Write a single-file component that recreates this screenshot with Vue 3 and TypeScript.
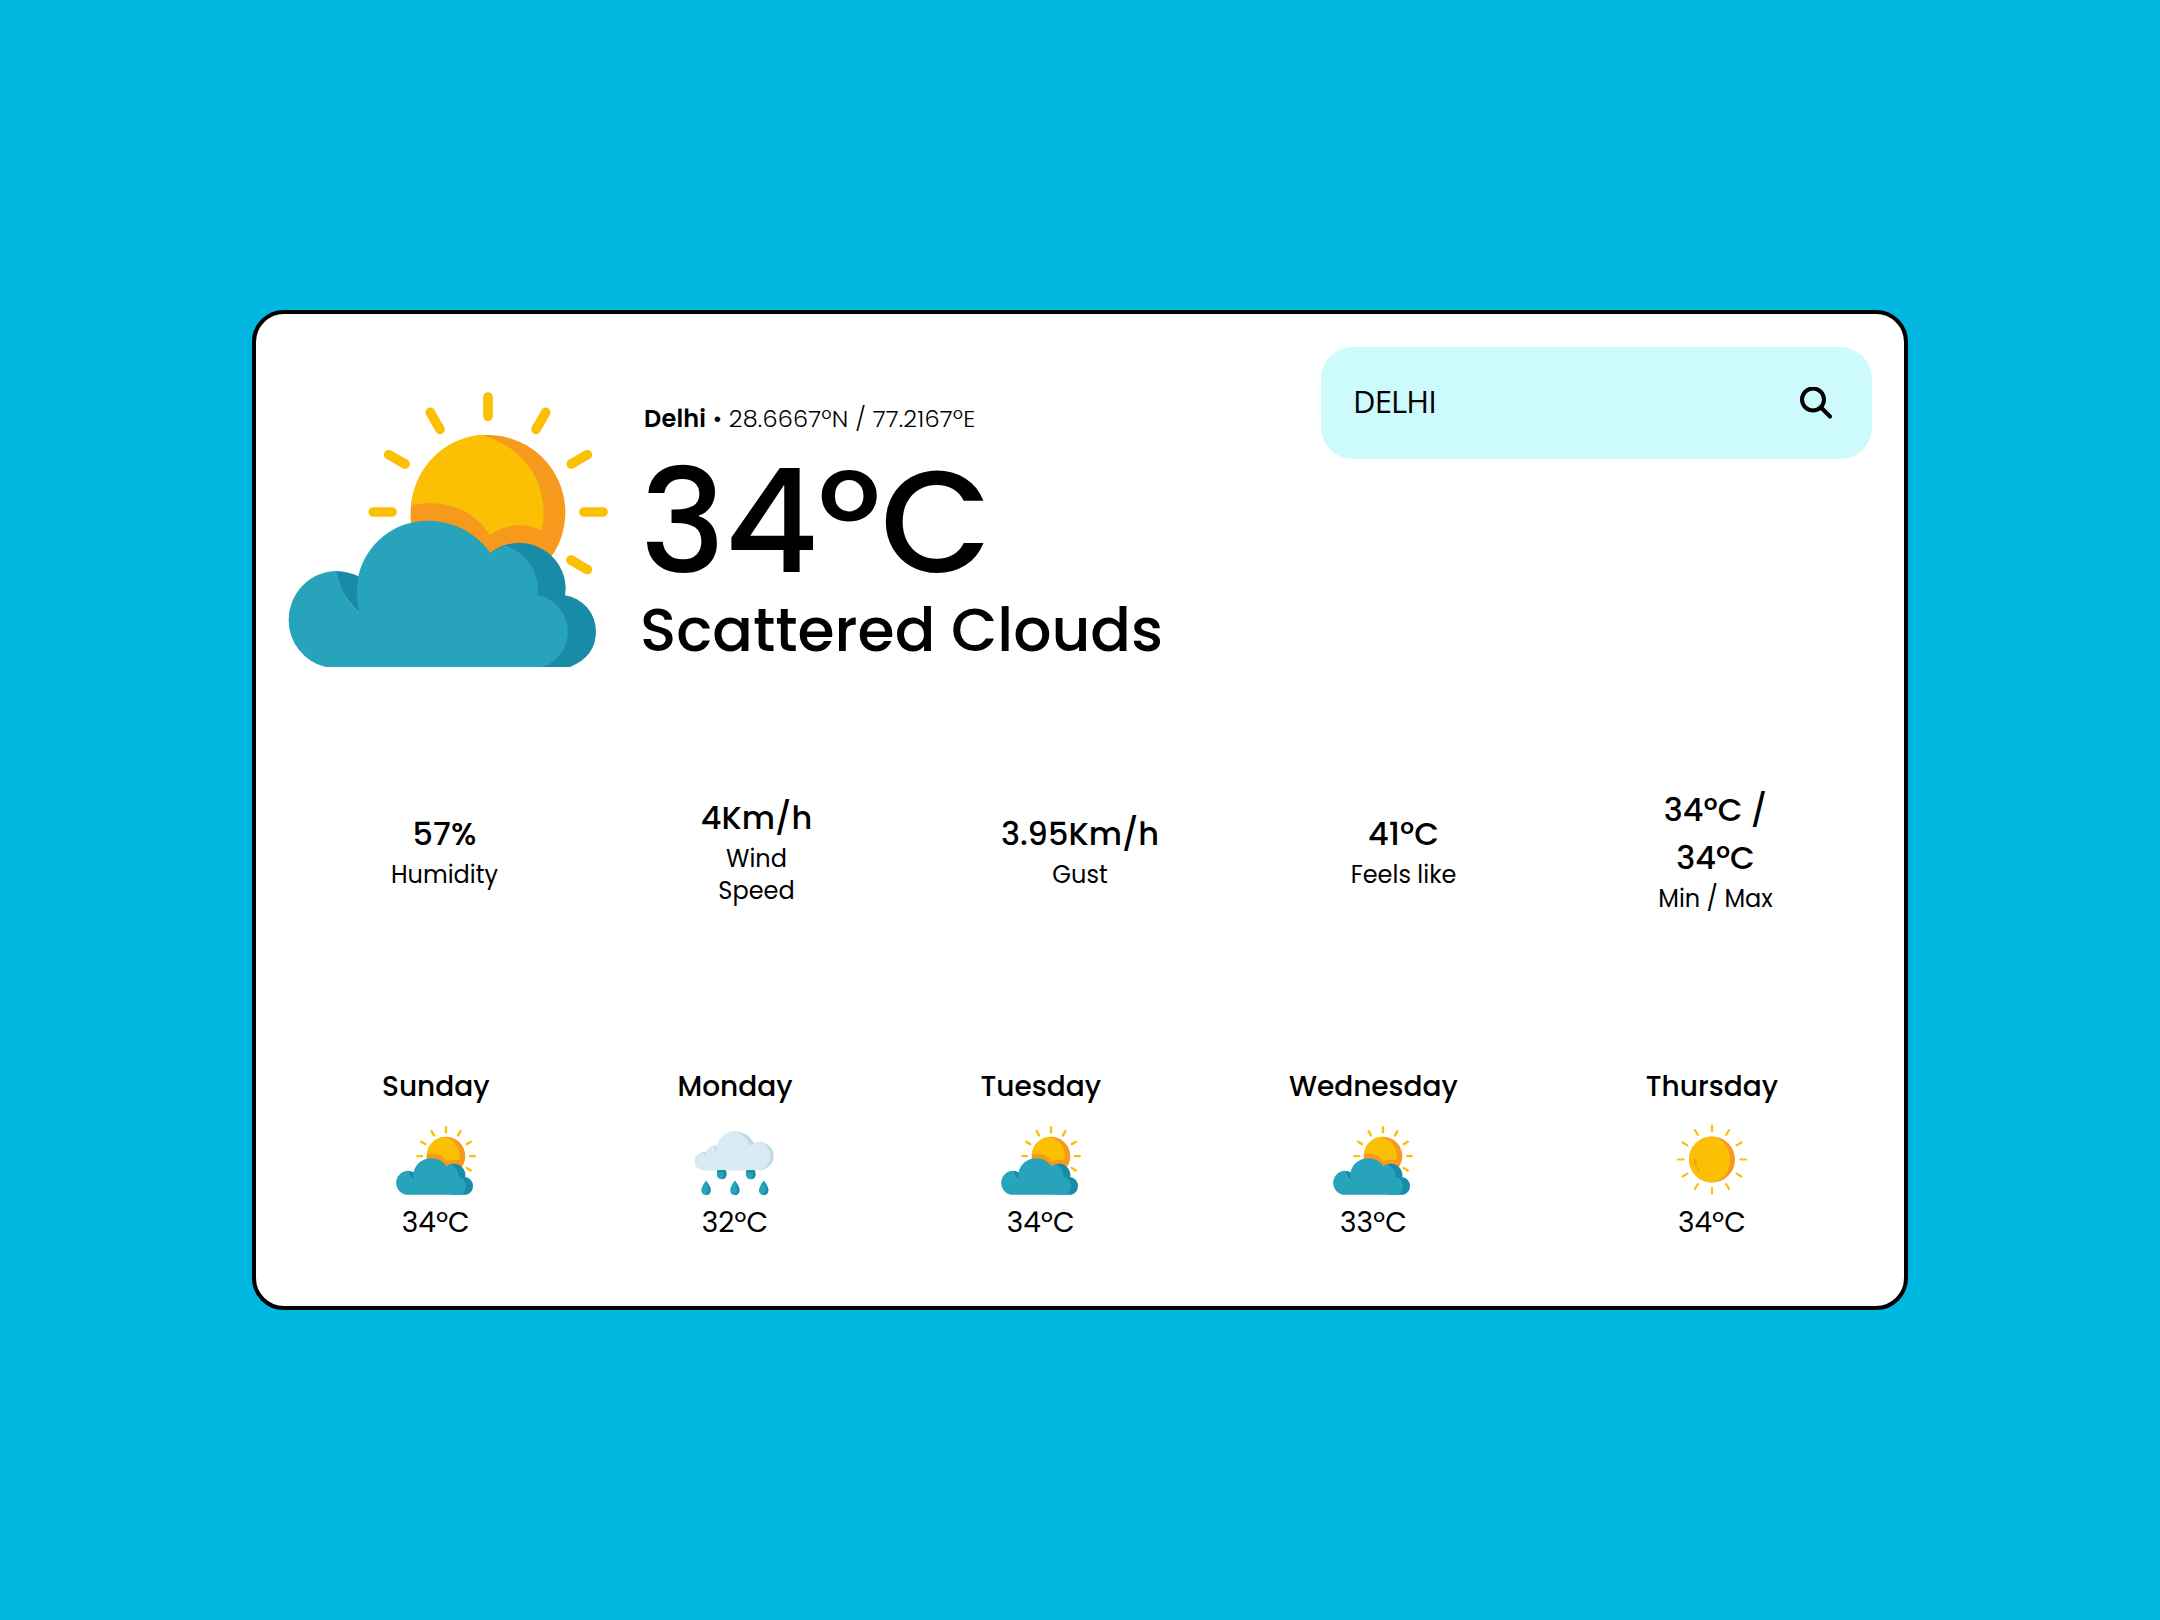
<script setup lang="ts">
interface Stat {
  value: string[]
  label: string[]
}
interface Day {
  name: string
  icon: 'partly' | 'rain' | 'sunny'
  temp: string
}

const stats: Stat[] = [
  { value: ['57%'], label: ['Humidity'] },
  { value: ['4Km/h'], label: ['Wind', 'Speed'] },
  { value: ['3.95Km/h'], label: ['Gust'] },
  { value: ['41ºC'], label: ['Feels like'] },
  { value: ['34ºC /', '34ºC'], label: ['Min / Max'] },
]

const days: Day[] = [
  { name: 'Sunday', icon: 'partly', temp: '34ºC' },
  { name: 'Monday', icon: 'rain', temp: '32ºC' },
  { name: 'Tuesday', icon: 'partly', temp: '34ºC' },
  { name: 'Wednesday', icon: 'partly', temp: '33ºC' },
  { name: 'Thursday', icon: 'sunny', temp: '34ºC' },
]

const rays = Array.from({ length: 12 }, (_, i) => i * 30)
</script>

<template>
  <main class="page">
    <svg class="defs" width="0" height="0" aria-hidden="true">
      <symbol id="partly" viewBox="144 276 960 826">
        <path
          d="M744 291V349M571 337L600 388M446 464L495 492M400 636H456M917 337L888 388M1042 464L994 492M1032 636H1089M993 780L1042 809"
          stroke="#fbc004"
          stroke-width="29"
          stroke-linecap="round"
        />
        <path fill="#f6991d" d="M513 670A232 232 0 0 1 512 635A232 232 0 1 1 935 769L751 800Z" />
        <path fill="#fbc004" d="M514 615A232 232 0 0 1 722 404C832 433 911 520 911 640Q911 668 904 692C856 668 795 670 751 706C692 618 605 598 514 615Z" />
        <path fill="#188ba7" d="M700 740L751 759Q788 729 838 729A138 138 0 0 1 977 868L975 886A109 109 0 0 1 1068 994Q1068 1070 990 1101H800Z" />
        <path fill="#188ba7" d="M289 813Q326 815 356 829L400 900L358 937C315 900 296 860 289 813Z" />
        <path
          fill="#27a3bb"
          d="M256 1101A144 144 0 0 1 146 962A146 146 0 0 1 291 813C297 862 318 904 358 937Q346 882 355 828A214 214 0 0 1 565 662A227 227 0 0 1 751 759Q772 743 797 737A138 138 0 0 1 893 884A113 113 0 0 1 909 1101Z"
        />
      </symbol>

      <symbol id="rain" viewBox="44 48 240 206">
        <path fill="#bedae6" d="M72 180A27 27 0 1 1 77 126Q89 103 111 106A57 57 0 0 1 166 63Q202 66 222 99Q232 95 242 95.500A42.500 42.500 0 0 1 242 180Z" />
        <path fill="#d9ebf2" d="M72 180A27 27 0 0 1 67 126Q69 133 73 138Q73 131 77 126Q85 111 100 106Q102 122 110 131Q107 117 111 106A57 57 0 0 1 166 63Q198 74 208 105L220 102Q230 97 242 96A44 44 0 0 1 236 180Z" />
        <g v-for="x in [124, 211]" :key="x" :transform="`translate(${x} 0)`">
          <path fill="#27a3bb" d="M-12 180H12Q15 186 14.500 193A14.500 14.500 0 0 1 -14.500 193Q-15 186 -12 180Z" />
          <path fill="#188ba7" d="M-12 180H12Q15 186 14.500 193A14.500 14.500 0 0 1 2 207Q9 197 6 187H-14Z" />
        </g>
        <g v-for="x in [77, 163.5, 250]" :key="x" :transform="`translate(${x} 0)`">
          <path fill="#27a3bb" d="M0 211Q14 230 14 241A14 14 0 0 1 -14 241Q-14 230 0 211Z" />
          <path fill="#188ba7" d="M0 211Q14 230 14 241A14 14 0 0 1 -2 254.500Q9 248 7 237Q5 223 0 211Z" />
        </g>
      </symbol>

      <symbol id="sunny" viewBox="156 198 240 206" overflow="visible">
        <circle cx="276" cy="298" r="69" fill="#f6991d" />
        <path fill="#fbc004" d="M276 229A69 69 0 0 0 276 367C312 360 330 333 330 298C330 263 312 236 276 229Z" />
        <path d="M225 298Q225 309 229 318M234 327L235 329" fill="none" stroke="#f6991d" stroke-width="6" stroke-linecap="round" />
        <path
          v-for="angle in rays"
          :key="angle"
          d="M276 196V213"
          stroke="#fbc004"
          stroke-width="6.500"
          stroke-linecap="round"
          :transform="`rotate(${angle} 276 298)`"
        />
      </symbol>
    </svg>

    <section class="card">
      <header class="current">
        <svg class="current-icon"><use href="#partly" /></svg>
        <div class="current-text">
          <p class="place"><strong>Delhi</strong> • 28.6667ºN / 77.2167ºE</p>
          <h1 class="temp">34ºC</h1>
          <h2 class="condition">Scattered Clouds</h2>
        </div>
        <div class="search">
          <span class="query">DELHI</span>
          <svg class="search-icon" viewBox="0 0 32 32" fill="none" stroke="#000" stroke-width="4" stroke-linecap="round">
            <circle cx="13" cy="12.5" r="11" />
            <path d="M21 20.500L30 29.500" />
          </svg>
        </div>
      </header>

      <div class="stats">
        <div v-for="(stat, i) in stats" :key="i" class="stat">
          <div v-for="line in stat.value" :key="line" class="stat-value">{{ line }}</div>
          <div class="stat-labels">
            <div v-for="line in stat.label" :key="line" class="stat-label">{{ line }}</div>
          </div>
        </div>
      </div>

      <div class="forecast">
        <div v-for="day in days" :key="day.name" class="day">
          <div class="day-name">{{ day.name }}</div>
          <svg class="day-icon"><use :href="`#${day.icon}`" /></svg>
          <div class="day-temp">{{ day.temp }}</div>
        </div>
      </div>
    </section>
  </main>
</template>

<style scoped>
.page {
  display: flex;
  align-items: center;
  justify-content: center;
  min-height: 100vh;
  background: #00b8df;
  color: #000;
  font-family: Poppins, Inter, "Liberation Sans", sans-serif;
}
.defs {
  position: absolute;
}
.card {
  box-sizing: border-box;
  width: 1656px;
  height: 1000px;
  padding: 33px 32px 0;
  border: 4px solid #000;
  border-radius: 32px;
  background: #fff;
}
.current {
  display: flex;
  align-items: flex-start;
  height: 346px;
}
.current-icon {
  width: 320px;
  height: 275.300px;
  margin-top: 45px;
}
.current-text {
  margin: 54px 0 0 32px;
  white-space: nowrap;
}
.place {
  margin: 0;
  padding-left: 4px;
  font-size: 24px;
  font-weight: 300;
  line-height: 36px;
  letter-spacing: 0.200px;
}
.place strong {
  font-weight: 600;
}
.temp {
  margin: 13px 0 0;
  font-size: 144px;
  font-weight: 500;
  line-height: 144px;
  letter-spacing: -0.700px;
}
.condition {
  margin: 6px 0 0;
  font-size: 60px;
  font-weight: 500;
  line-height: 60px;
}
.search {
  display: flex;
  align-items: center;
  justify-content: space-between;
  box-sizing: border-box;
  width: 551px;
  height: 112px;
  margin-left: auto;
  padding: 0 40px 0 32px;
  border-radius: 32px;
  background: #cdfafd;
}
.query {
  padding-bottom: 5px;
  font-family: "Open Sans", sans-serif;
  font-size: 31px;
  line-height: 48px;
  letter-spacing: -0.850px;
}
.search-icon {
  width: 32px;
  height: 32px;
}
.stats {
  display: grid;
  grid-template-columns: 313px 311px 336px 311px 313px;
  align-items: center;
  height: 315px;
  text-align: center;
}
.stat-value {
  font-size: 32px;
  font-weight: 500;
  line-height: 48px;
}
.stat-labels {
  padding-top: 1px;
}
.stat-label {
  font-size: 24px;
  line-height: 32px;
}
.forecast {
  display: flex;
  justify-content: space-around;
  padding-top: 58px;
}
.day {
  display: flex;
  flex-direction: column;
  align-items: center;
  font-size: 28px;
  line-height: 42px;
}
.day-name {
  font-weight: 500;
}
.day-icon {
  width: 80px;
  height: 69px;
  margin: 18px 0 7px;
  overflow: visible;
}
</style>

<style>
body {
  margin: 0;
}
</style>
